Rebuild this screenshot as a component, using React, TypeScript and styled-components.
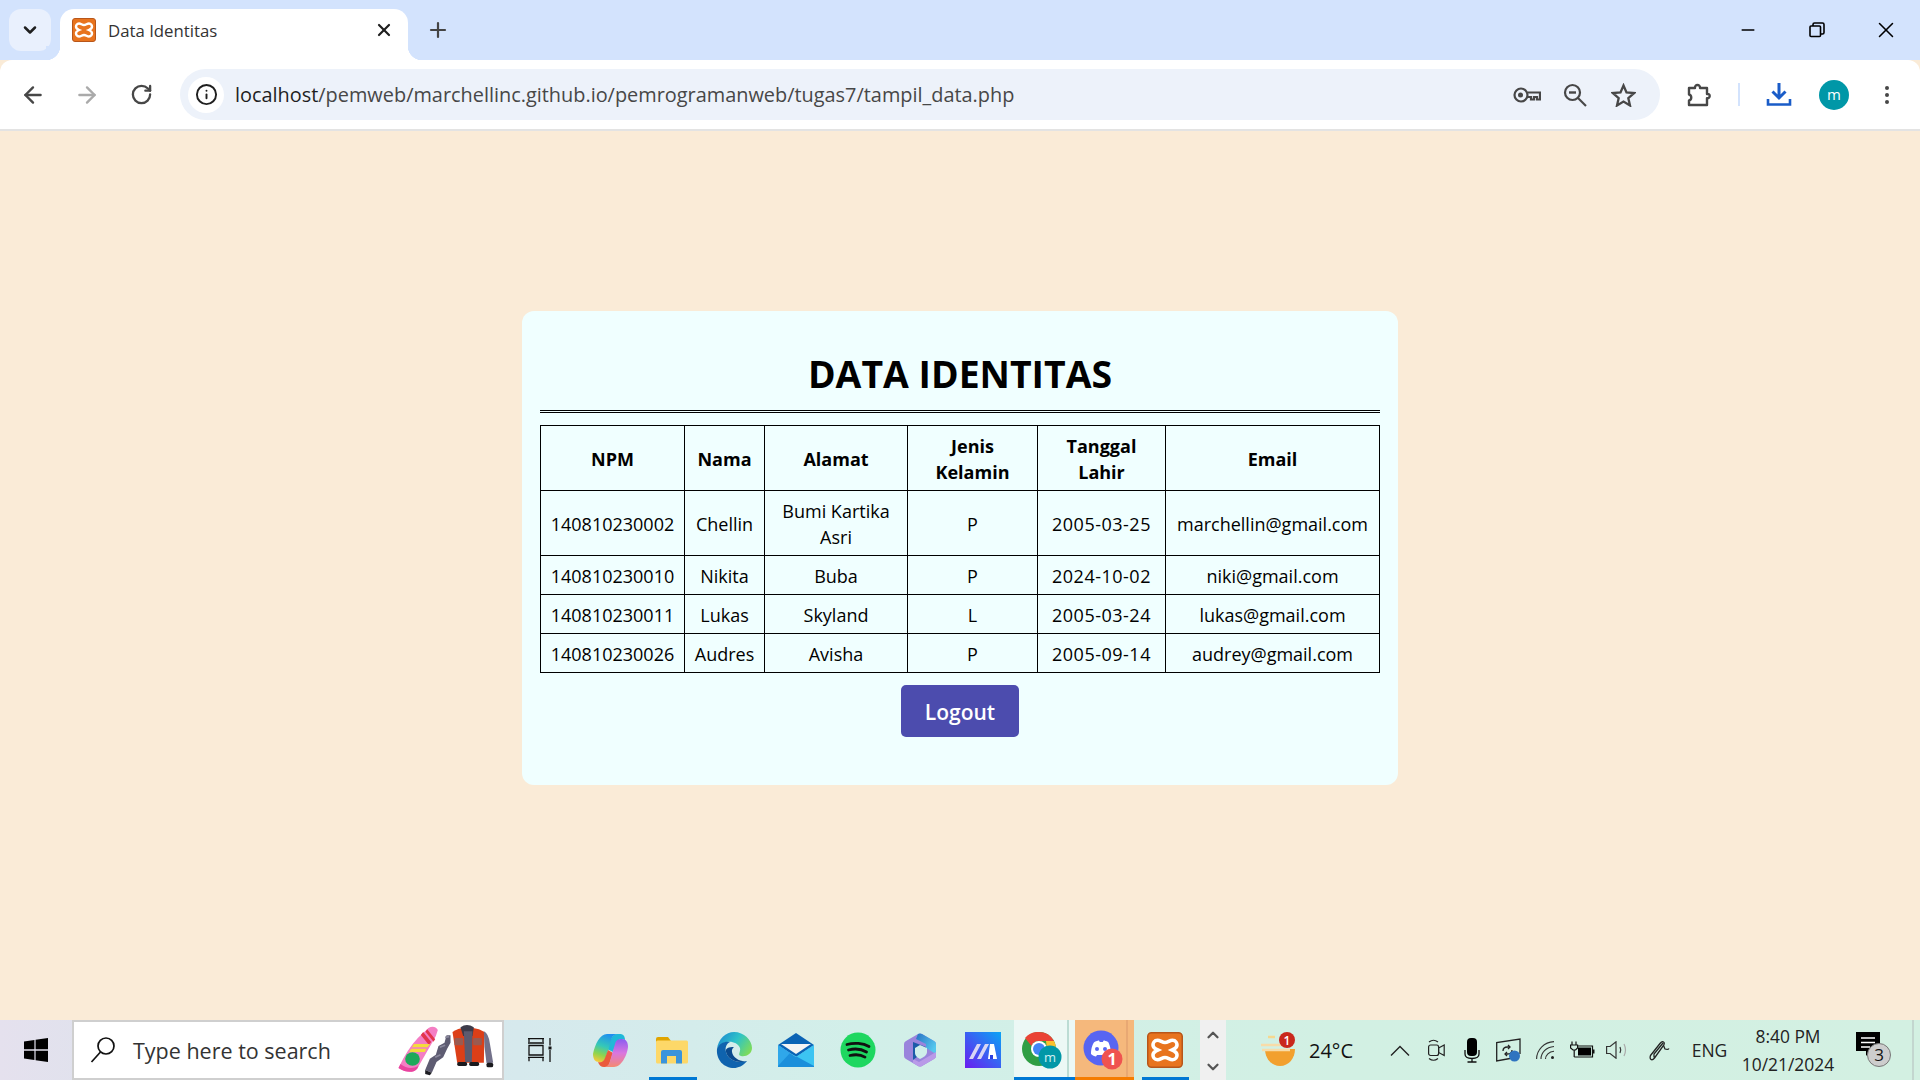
import React from 'react';
import styled, { createGlobalStyle } from 'styled-components';
import { ArrowLeft, ArrowRight, ChevronDown, ChevronUp, Info, Minus, Plus, RotateCw, X } from 'lucide-react';

const FONT = '"Open Sans", "Noto Sans", sans-serif';

const GlobalStyle = createGlobalStyle`
  html, body {
    margin: 0;
    padding: 0;
    height: 100%;
  }
  body {
    font-family: ${FONT};
    background: #faebd7;
    overflow: hidden;
  }
`;

const Screen = styled.div`
  width: 1920px;
  height: 1080px;
  display: flex;
  flex-direction: column;
`;

/* chrome window */
const TabStrip = styled.div`
  height: 60px;
  background: #d3e3fd;
  display: flex;
  align-items: flex-end;
  padding-left: 9px;
`;

const TabSearch = styled.div`
  width: 42px;
  height: 42px;
  margin-bottom: 9px;
  border-radius: 12px;
  background: #e9f0fd;
  color: #1f1f1f;
  display: flex;
  align-items: center;
  justify-content: center;
`;

const Tab = styled.div`
  width: 348px;
  height: 51px;
  margin-left: 9px;
  padding: 0 0 9px 12px;
  box-sizing: border-box;
  background: #fff;
  border-radius: 14px 14px 0 0;
  display: flex;
  align-items: center;
  gap: 12px;
  position: relative;
  &::before,
  &::after {
    content: '';
    position: absolute;
    bottom: 0;
    width: 14px;
    height: 14px;
  }
  &::before {
    left: -14px;
    background: radial-gradient(circle at 0 0, #d3e3fd 14px, #fff 14.5px);
  }
  &::after {
    right: -14px;
    background: radial-gradient(circle at 100% 0, #d3e3fd 14px, #fff 14.5px);
  }
`;

const TabTitle = styled.span`
  flex: 1;
  padding-top: 1px;
  font-size: 16.8px;
  color: #333;
`;

const TabClose = styled.div`
  width: 24px;
  margin-right: 12px;
  display: flex;
  justify-content: center;
  color: #1f1f1f;
`;

const NewTab = styled.div`
  width: 24px;
  height: 24px;
  margin: 0 0 18px 18px;
  color: #444;
`;

const WindowControls = styled.div`
  margin-left: auto;
  height: 60px;
  display: flex;
  align-items: center;
  color: #000;
`;

const WindowButton = styled.div<{ $w: number }>`
  width: ${(p) => p.$w}px;
  display: flex;
  justify-content: center;
`;

const Toolbar = styled.div`
  height: 69px;
  background: #fff;
  border-radius: 12px 12px 0 0;
  display: flex;
  align-items: center;
  padding-left: 6px;
`;

const NavButton = styled.div<{ $off?: boolean }>`
  width: 54px;
  display: flex;
  justify-content: center;
  color: ${(p) => (p.$off ? '#aaa' : '#474747')};
`;

const Omnibox = styled.div`
  width: 1480px;
  height: 51px;
  margin-left: 12px;
  border-radius: 26px;
  background: #edf2fa;
  display: flex;
  align-items: center;
  padding: 0 23px 0 8px;
  box-sizing: border-box;
`;

const SiteInfo = styled.div`
  width: 36px;
  height: 36px;
  border-radius: 50%;
  background: #fff;
  display: flex;
  align-items: center;
  justify-content: center;
  color: #1f1f1f;
`;

const Url = styled.div`
  flex: 1;
  margin-left: 11px;
  font-size: 19.9px;
  color: #474747;
  white-space: nowrap;
  span {
    color: #1f1f1f;
  }
`;

const OmniIcons = styled.div`
  display: flex;
  align-items: center;
  gap: 20px;
  color: #474747;
`;

const OmniIcon = styled.div`
  width: 28px;
  display: flex;
  justify-content: center;
`;

const ToolIcons = styled.div`
  flex: 1;
  display: flex;
  align-items: center;
  padding-left: 26px;
  color: #474747;
`;

const Separator = styled.div`
  width: 2px;
  height: 23px;
  margin: 0 26px 0 26px;
  background: #d3e3fd;
`;

const Avatar = styled.div`
  width: 30px;
  height: 30px;
  margin-left: 27px;
  border-radius: 50%;
  background: #0097a7;
  color: #fff;
  font-size: 15px;
  line-height: 28px;
  text-align: center;
`;

const Dots = styled.div`
  margin-left: 36px;
  width: 4px;
  display: flex;
  flex-direction: column;
  gap: 3px;
  i {
    width: 4px;
    height: 4px;
    border-radius: 50%;
    background: #474747;
  }
`;

/* page */
const Page = styled.main`
  flex: 1;
  border-top: 2px solid #e3e3e3;
  background: #faebd7;
  display: flex;
  justify-content: center;
  align-items: flex-start;
  padding-top: 180px;
`;

const Card = styled.section`
  width: 876px;
  box-sizing: border-box;
  padding: 38px 18px 48px;
  background: #f0ffff;
  border-radius: 12px;
  display: flex;
  flex-direction: column;
  align-items: center;
`;

const Title = styled.h1`
  margin: 0;
  font-size: 37.4px;
  line-height: 50px;
  font-weight: 700;
  color: #000;
`;

const Rule = styled.hr`
  width: 100%;
  margin: 11px 0 12px;
  border: 0;
  border-top: 3px double #000;
  height: 0;
`;

const Table = styled.table`
  width: 839px;
  align-self: flex-start;
  table-layout: fixed;
  border-collapse: collapse;
  font-size: 18px;
  line-height: 26px;
  color: #000;
`;

const Col = styled.col<{ $w: number }>`
  width: ${(p) => p.$w}px;
`;

const Head = styled.th`
  border: 1px solid #000;
  padding: 7px 10px 5px;
  font-weight: 700;
  text-align: center;
`;

const Cell = styled.td<{ $wide?: boolean }>`
  border: 1px solid #000;
  padding: 7px 8px 5px;
  text-align: center;
  letter-spacing: ${(p) => (p.$wide ? '0.5px' : 'normal')};
`;

const LogoutButton = styled.button`
  width: 118px;
  height: 52px;
  margin-top: 12px;
  padding: 2px 0 0;
  border: 0;
  border-radius: 5px;
  background: #4c4cae;
  color: #fff;
  font-family: ${FONT};
  font-size: 21px;
  font-weight: 600;
`;

/* taskbar */
const Taskbar = styled.footer`
  height: 60px;
  display: flex;
  align-items: stretch;
  background: linear-gradient(90deg, #e5e1ee 0%, #e0e2ed 5%, #d6e9ed 27%, #d2efe9 45%, #d2f0e3 70%, #d3f0e2 100%);
`;

const StartButton = styled.div`
  width: 72px;
  display: flex;
  align-items: center;
  justify-content: center;
`;

const SearchBox = styled.div`
  width: 432px;
  box-sizing: border-box;
  border: 2px solid #cfcfcf;
  background: #fff;
  display: flex;
  align-items: center;
  padding-left: 16px;
`;

const SearchText = styled.span`
  margin-left: 17px;
  font-size: 21.5px;
  color: #333;
`;

const SearchArt = styled.div`
  margin-left: auto;
  display: flex;
`;

const TaskView = styled.div`
  width: 72px;
  margin-right: 3px;
  display: flex;
  align-items: center;
  justify-content: center;
`;

const TaskItem = styled.div<{
  $w?: number;
  $bg?: string;
  $bar?: string;
  $barL?: number;
  $barW?: number;
  $stripe?: string;
  $shift?: number;
}>`
  width: ${(p) => p.$w ?? 62}px;
  box-sizing: border-box;
  padding-right: ${(p) => p.$shift ?? 0}px;
  background: ${(p) => p.$bg ?? 'transparent'};
  display: flex;
  align-items: center;
  justify-content: center;
  position: relative;
  &::before {
    content: '';
    position: absolute;
    top: 0;
    bottom: 0;
    right: 6px;
    width: 2px;
    background: ${(p) => p.$stripe ?? 'transparent'};
  }
  &::after {
    content: '';
    position: absolute;
    bottom: 0;
    left: ${(p) => p.$barL ?? 0}px;
    width: ${(p) => p.$barW ?? 48}px;
    height: 3px;
    background: ${(p) => p.$bar ?? 'transparent'};
  }
`;

const Spinner = styled.div`
  width: 26px;
  background: #f0f0f0;
  color: #555;
  display: flex;
  flex-direction: column;
  align-items: center;
  justify-content: space-between;
  padding: 6px 0 4px;
  box-sizing: border-box;
`;

const Weather = styled.div`
  margin-left: 32px;
  display: flex;
  align-items: center;
  gap: 13px;
  font-size: 20px;
  color: #111;
  width: 124px;
`;

const Tray = styled.div`
  flex: 1;
  display: flex;
  align-items: center;
  color: #222;
`;

const TrayIcon = styled.div<{ $w: number }>`
  width: ${(p) => p.$w}px;
  display: flex;
  justify-content: center;
`;

const Lang = styled.span`
  width: 51px;
  text-align: center;
  font-size: 17.5px;
  color: #222;
`;

const Clock = styled.div`
  width: 106px;
  font-size: 17.4px;
  line-height: 28px;
  text-align: center;
  color: #222;
`;

const EdgeLine = styled.div`
  width: 2px;
  height: 60px;
  margin-left: auto;
  margin-right: 6px;
  background: #c3d6cf;
`;

const people = [
  { npm: '140810230002', nama: 'Chellin', alamat: 'Bumi Kartika Asri', jk: 'P', lahir: '2005-03-25', email: 'marchellin@gmail.com' },
  { npm: '140810230010', nama: 'Nikita', alamat: 'Buba', jk: 'P', lahir: '2024-10-02', email: 'niki@gmail.com' },
  { npm: '140810230011', nama: 'Lukas', alamat: 'Skyland', jk: 'L', lahir: '2005-03-24', email: 'lukas@gmail.com' },
  { npm: '140810230026', nama: 'Audres', alamat: 'Avisha', jk: 'P', lahir: '2005-09-14', email: 'audrey@gmail.com' },
];

const COLS = [144, 80, 143, 130, 128, 214];

const Xampp: React.FC<{ size: number }> = ({ size }) => (
  <svg width={size} height={size} viewBox="0 0 24 24">
    <rect x="0.5" y="0.5" width="23" height="23" rx="2.500" fill="#e8741e" stroke="#b8561a" />
    <path
      d="M7 5.500c2 0 3 1.500 5 1.500s3-1.500 5-1.500c2.200 0 3 2 3 3.200 0 1.800-1.600 2.600-3.200 3.300 1.600.7 3.200 1.500 3.200 3.300 0 1.200-.8 3.200-3 3.200-2 0-3-1.500-5-1.500s-3 1.500-5 1.500c-2.200 0-3-2-3-3.200 0-1.800 1.600-2.600 3.200-3.300C5.600 11.300 4 10.500 4 8.700c0-1.200.8-3.200 3-3.200z"
      fill="none"
      stroke="#fff"
      strokeWidth="2.400"
    />
  </svg>
);

const KeyIcon = () => (
  <svg width="28" height="18" viewBox="0 0 28 18" fill="none" stroke="currentColor" strokeWidth="2.200">
    <circle cx="8" cy="9" r="6.500" />
    <circle cx="7.500" cy="9" r="2.500" fill="currentColor" stroke="none" />
    <path d="M14.500 6.500H27v7h-3V11h-3v2.500h-3V11h-3.500" />
  </svg>
);

const ZoomOutIcon = () => (
  <svg width="24" height="24" viewBox="0 0 24 24" fill="none" stroke="currentColor" strokeWidth="2.200">
    <circle cx="9.500" cy="9.500" r="7.500" />
    <path d="M15 15l8 8" />
    <path d="M6 9.500h7" strokeWidth="2.400" />
  </svg>
);

const StarIcon = () => (
  <svg width="25" height="24" viewBox="0 0 25 24" fill="none" stroke="currentColor" strokeWidth="2.300" strokeLinejoin="miter">
    <path d="M12.500 2.500l3 7 7.500.6-5.700 5 1.700 7.400-6.500-3.900-6.500 3.900 1.700-7.400L2 10.100l7.500-.6z" />
  </svg>
);

const PuzzleIcon = () => (
  <svg width="26" height="26" viewBox="0 0 26 26" fill="none" stroke="currentColor" strokeWidth="2.400" strokeLinejoin="round">
    <path d="M3 6h6c-.6-4 5.500-4 5 0h7v6c3.600-.6 3.600 4.700 0 4.200V23H3v-4.500c3-.6 3-5.300 0-6z" />
  </svg>
);

const DownloadIcon = () => (
  <svg width="26" height="26" viewBox="0 0 26 26" fill="none" stroke="#1a5cc8" strokeWidth="3">
    <path d="M13 1v14M6.500 9.500 13 16l6.500-6.500" />
    <path d="M2 17v5.500h22V17" strokeWidth="2.600" />
  </svg>
);

const RestoreIcon = () => (
  <svg width="16" height="16" viewBox="0 0 16 16" fill="none" stroke="currentColor" strokeWidth="1.600">
    <rect x="1" y="4" width="10.500" height="10.500" rx="1" />
    <path d="M4 4V2.500Q4 1 5.500 1h8Q15 1 15 2.500v8Q15 12 13.500 12H11.500" />
  </svg>
);

const WindowsIcon = () => (
  <svg width="24" height="24" viewBox="0 0 24 24" fill="#000">
    <path d="M0 3.500 10.400 2V11.300H0zM11.600 1.800 24 0V11.300H11.600zM0 12.700h10.400V22L0 20.500zM11.600 12.700H24V24l-12.400-1.800z" />
  </svg>
);

const SearchGlass = () => (
  <svg width="26" height="28" viewBox="0 0 26 28" fill="none" stroke="#111" strokeWidth="1.700">
    <circle cx="16" cy="10" r="8" />
    <path d="M10.500 16 1.500 26" />
  </svg>
);

const HoverArt = () => (
  <svg width="107" height="56" viewBox="0 6 320 168">
    <path d="M100 24Q118 14 128 30Q124 48 112 66L66 146Q46 166 10 144Q36 88 68 54Z" fill="#f47ec4" />
    <path d="M10 144Q46 166 66 146L70 138Q42 152 16 132Z" fill="#e9449f" />
    <path d="M84 36l24 30-7 9-24-30zM96 28l24 30-5 7-24-30z" fill="#e2354c" />
    <path d="M56 72h48l-7 10H50zM48 86h46l-5 10H42z" fill="#f4dc3c" />
    <ellipse cx="52" cy="117" rx="22" ry="20" fill="#1fa85a" />
    <path d="M90 150l14-34 18-12 8-26 18-10 6-22 12 0 0 22-10 18-12 26-20 14-14 32z" fill="#5e5c72" />
    <path d="M120 112l16-8M134 82l16-6M150 52l12-2" stroke="#8a889c" strokeWidth="5" />
    <path d="M90 150l20 8-6 8-14-4z" fill="#1d1d22" />
    <path d="M172 36Q190 24 206 24L234 24Q252 26 268 36L266 128H186Z" fill="#dc3f18" />
    <path d="M196 22Q215 8 236 22L232 48H204Z" fill="#3c3b4a" />
    <path d="M206 34h26l-2 92h-20z" fill="#5c5a6e" />
    <rect x="178" y="54" width="26" height="22" rx="3" fill="#9a5a50" />
    <rect x="234" y="54" width="26" height="22" rx="3" fill="#9a5a50" />
    <path d="M266 34Q280 40 284 70L294 128 274 130 268 80z" fill="#73718a" />
    <rect x="186" y="126" width="30" height="12" rx="5" fill="#1a1a1e" />
    <rect x="222" y="126" width="30" height="12" rx="5" fill="#1a1a1e" />
    <rect x="274" y="128" width="20" height="14" rx="5" fill="#1a1a1e" />
  </svg>
);

const TaskViewIcon = () => (
  <svg width="24" height="24" viewBox="0 0 24 24" fill="none" stroke="#111" strokeWidth="1.300">
    <path d="M0 .7h16M1 .7v3.300M15 .7v3.300M0 5h16" />
    <path d="M1 7.500h14v9.500H1z" />
    <path d="M0 19.300h16M1 19.300v4M15 19.300v4" />
    <path d="M22 0v7.500M22 12v12" />
    <rect x="20.500" y="8.500" width="3" height="3" fill="#111" stroke="none" />
  </svg>
);

const CopilotIcon = () => (
  <svg width="35" height="33" viewBox="0 0 35 33">
    <defs>
      <linearGradient id="cp1" x1="0.6" y1="0" x2="0.3" y2="1">
        <stop offset="0" stopColor="#1f8ff0" />
        <stop offset="0.45" stopColor="#35c8b8" />
        <stop offset="0.75" stopColor="#8ed44e" />
        <stop offset="1" stopColor="#f4c93a" />
      </linearGradient>
      <linearGradient id="cp2" x1="0.5" y1="0" x2="0.5" y2="1">
        <stop offset="0" stopColor="#8a5cf0" />
        <stop offset="0.5" stopColor="#d976e0" />
        <stop offset="1" stopColor="#f58a70" />
      </linearGradient>
    </defs>
    <path d="M24 0h3c3 0 5 2 5 6l-3-1c-3 0-5 2-6 5l-3 8-6-3 4-10c1-3 3-5 6-5z" fill="#20b8d8" />
    <path d="M14 0h11c-4 0-6 2-7 7l-5 16c-1 4-3 6-7 5-4 0-6-3-6-8C2 10 7 0 14 0z" fill="url(#cp1)" />
    <path d="M12 33h-1c-3 0-5-2-6-5 4 1 6-1 7-4l3-8 5 3-3 9c-1 3-2 5-5 5z" fill="#ea5a3c" />
    <path d="M21 33H10c4 0 6-2 7-6l5-17c1-4 3-5 7-5 4 0 6 3 6 8-1 9-7 20-14 20z" fill="url(#cp2)" />
  </svg>
);

const FolderIcon = () => (
  <svg width="32" height="27" viewBox="0 0 32 27">
    <path d="M0 2q0-2 2-2h10l3 4v3H0z" fill="#e0a400" />
    <rect x="0" y="3.500" width="32" height="23" rx="1.500" fill="#fdd868" />
    <path d="M5 26.500V15q0-2 2-2h17q2 0 2 2v11.500h-6V19h-9v7.500z" fill="#3a94dc" />
  </svg>
);

const EdgeIcon = () => (
  <svg width="36" height="36" viewBox="0 0 36 36">
    <defs>
      <linearGradient id="ed1" x1="0" y1="0.2" x2="1" y2="0.7">
        <stop offset="0" stopColor="#1c8ad2" />
        <stop offset="0.5" stopColor="#2dc3c8" />
        <stop offset="1" stopColor="#7fdc58" />
      </linearGradient>
    </defs>
    <path d="M1 17C2 7 10 0 18 0c10 0 18 8 18 16 0 6-6 9-11 8-4-1 0-4-1-8-2-5-8-7-13-6-5 1-9 4-10 7z" fill="url(#ed1)" />
    <path d="M1 17c2-6 8-8 13-7-4 2-5 6-4 10 2 8 12 12 21 9-4 5-9 7-13 7C8 36 0 28 1 17z" fill="#0f63ae" />
    <path d="M10 20c2 8 12 12 21 9-7 1-14-3-15-9-.5-2 .5-4 2-5-5 0-9 1-8 5z" fill="#0a4a8e" />
  </svg>
);

const MailIcon = () => (
  <svg width="36" height="34" viewBox="0 0 36 34">
    <path d="M0 12 18 0l18 12-18 12z" fill="#0a63b5" />
    <path d="M3 11h30L18 21z" fill="#f4f4f4" />
    <path d="M0 12 18 24 36 12v22H0z" fill="#1b8fdb" />
    <path d="M12 20l6 4 18-12v21z" fill="#3cc4f2" />
    <path d="M0 12l12 8L0 33z" fill="#2fa7ea" />
  </svg>
);

const SpotifyIcon = () => (
  <svg width="36" height="36" viewBox="0 0 36 36" fill="none">
    <circle cx="18" cy="18" r="17.500" fill="#1ed760" />
    <path d="M7 12.500c7-2 16-1.500 22 2M8.500 18c6-1.600 13-1 18 2M10 23.500c5-1.200 11-.8 15 1.600" stroke="#111" strokeWidth="2.800" strokeLinecap="round" />
  </svg>
);

const M365Icon = () => (
  <svg width="32" height="34" viewBox="0 0 32 34">
    <defs>
      <linearGradient id="ms1" x1="0" y1="0" x2="1" y2="0.6">
        <stop offset="0" stopColor="#2872c4" />
        <stop offset="1" stopColor="#56c8ee" />
      </linearGradient>
    </defs>
    <path d="M2 8 14 1q2-1 4 0l12 7q2 1 2 3v12q0 2-2 3L18 33q-2 1-4 0L2 26q-2-1-2-3V11q0-2 2-3z" fill="#9a84dc" />
    <path d="M14 1q2-1 4 0l12 7q2 1 2 3v10l-10-6v-4L12 6z" fill="url(#ms1)" />
    <path d="M9 26l6 3 17-10v4q0 2-2 3L18 33q-2 1-4 0l-5-3z" fill="#b99ae8" />
    <path d="M9 9l13 5v3L9 27z" fill="#1c5aa8" />
    <path d="M16 12l7 3v4c0 3-3 5-7 7-2-1-5-3-5-6v-5z" fill="#cfeeea" />
  </svg>
);

const MIcon = () => (
  <svg width="36" height="36" viewBox="0 0 36 36">
    <defs>
      <linearGradient id="mi" x1="0" y1="1" x2="1" y2="0">
        <stop offset="0" stopColor="#6a1cf0" />
        <stop offset="1" stopColor="#0aa4f5" />
      </linearGradient>
    </defs>
    <rect width="36" height="36" fill="url(#mi)" />
    <path d="M4 27l8-15h4L8 27zM12 27l8-15h4l-8 15z" fill="#d8d6f5" />
    <path d="M25 12h4l3 15h-9z" fill="#fff" />
    <rect x="25" y="23" width="3" height="4" fill="#2b3fe0" />
  </svg>
);

const ChromeIcon = () => (
  <svg width="40" height="37" viewBox="0 0 40 37">
    <circle cx="17" cy="17" r="17" fill="#2f9e44" />
    <path d="M17 0a17 17 0 0 1 15 9H17a8 8 0 0 0-7.500 5L3 6A17 17 0 0 1 17 0z" fill="#ea4335" />
    <path d="M32 9a17 17 0 0 1-9 24l-5-9 7-7-1-8z" fill="#fbc02d" />
    <circle cx="17" cy="17" r="8" fill="#fff" />
    <circle cx="17" cy="17" r="6" fill="#4285f4" />
    <circle cx="28" cy="25" r="11.500" fill="#0097a7" />
    <text x="28" y="30" textAnchor="middle" fontSize="13" fill="#cdeff2" fontFamily={FONT}>m</text>
  </svg>
);

const DiscordIcon = () => (
  <svg width="40" height="40" viewBox="0 0 40 40">
    <circle cx="18" cy="18" r="17.500" fill="#5865f2" />
    <path d="M8 24c0-6 2-11 3.500-12 2-1 3.500-1.500 4.500-1.500l.8 1.500h3l.8-1.500c1 0 2.500.5 4.500 1.500C26 13 28 18 28 24c-1.500 1.500-3.500 2.500-5 2.500L22 25h-8l-1 1.500c-1.500 0-3.500-1-5-2.500z" fill="#fff" />
    <circle cx="14" cy="19" r="2" fill="#5865f2" />
    <circle cx="22" cy="19" r="2" fill="#5865f2" />
    <circle cx="29" cy="29" r="10.500" fill="#ef5350" />
    <text x="29" y="35" textAnchor="middle" fontSize="16" fontWeight="700" fill="#fff" fontFamily={FONT}>1</text>
  </svg>
);

const WeatherIcon = () => (
  <svg width="38" height="38" viewBox="0 0 38 38">
    <path d="M7 18h30c0 9-6 17-15 17S7 27 7 18z" fill="#f2a02e" />
    <path d="M10 6h7" stroke="#f5d890" strokeWidth="2.500" />
    <path d="M3 14h22M4 19h28" stroke="#f8dca8" strokeWidth="2.500" />
    <circle cx="29" cy="9" r="8" fill="#c9281c" />
    <text x="29" y="14" textAnchor="middle" fontSize="12" fontWeight="600" fill="#fff" fontFamily={FONT}>1</text>
  </svg>
);

const CaretIcon = () => (
  <svg width="20" height="11" viewBox="0 0 20 11" fill="none" stroke="#222" strokeWidth="1.400">
    <path d="M1 10.500 10 1.500l9 9" />
  </svg>
);

const MeetIcon = () => (
  <svg width="17" height="22" viewBox="0 0 17 22" fill="none" stroke="#222" strokeWidth="1.200">
    <rect x="0.600" y="6" width="10" height="10.500" rx="2" />
    <path d="M10.600 9l5.600-3v10.500l-5.600-3zM1 3Q5.500-.5 10 3M1 19.500q4.500 3.500 9 0" />
  </svg>
);

const MicIcon = () => (
  <svg width="16" height="25" viewBox="0 0 16 25" fill="none" stroke="#111" strokeWidth="1.300">
    <rect x="3" y="0" width="10" height="18" rx="4" fill="#000" stroke="none" />
    <path d="M1 12v4q0 4.500 7 4.500t7-4.500v-4M8 20.500v3.500M3.500 24h9" />
  </svg>
);

const ScreenIcon = () => (
  <svg width="25" height="24" viewBox="0 0 25 24" fill="none" stroke="#222" strokeWidth="1.300">
    <path d="M14 20.500 .7 23V4.500L24 1v15" />
    <path d="M7 13q0-4 4.500-4l2 0M16 12q0 4-4.500 4l-2 0" />
    <path d="M12 7l2 2-2 2M11 14l-2 2 2 2" />
    <circle cx="18.500" cy="18" r="5.500" fill="#2f74c0" stroke="none" />
  </svg>
);

const WifiIcon = () => (
  <svg width="19" height="19" viewBox="0 0 19 19" fill="none" stroke="#333" strokeWidth="1.100">
    <path d="M.6 18C.6 9 8 1 18 .6M5 18C5 12 10 6 18 5.500M9.500 18c0-3.500 3.500-7.500 8.500-7.800" />
    <circle cx="16.500" cy="16.500" r="1.500" fill="#222" stroke="none" />
  </svg>
);

const BatteryIcon = () => (
  <svg width="25" height="18" viewBox="0 0 25 18" fill="none" stroke="#111" strokeWidth="1.200">
    <path d="M2 .5V4M6 .5V4M.6 4h7v3L5.500 9H3L.6 7zM4.200 9v7" />
    <path d="M4.200 16h18.300V5H8" />
    <rect x="8" y="6.500" width="13" height="8" fill="#000" stroke="none" />
    <rect x="23" y="8.500" width="1.500" height="4" fill="#111" stroke="none" />
  </svg>
);

const SpeakerIcon = () => (
  <svg width="23" height="18" viewBox="0 0 23 18" fill="none" stroke="#333" strokeWidth="1.200">
    <path d="M.6 5.500h3.500L10 .8v16.400l-5.900-4.700H.6z" />
    <path d="M14 6q1.500 3 0 6" />
    <path d="M18 3q3 6 0 12" stroke="#aaa" />
  </svg>
);

const PenIcon = () => (
  <svg width="21" height="21" viewBox="0 0 21 21" fill="none" stroke="#222" strokeWidth="1.300">
    <path d="M1.500 15.500 11 3.500q2-2.500 3.500-1.500t0 3.500L5.500 18q-2 2.500-3.500 1.500t-.5-4zM5 17.500 5 14l9-11" />
    <path d="M14.500 5.500 16 9q3 1 4-.5" />
  </svg>
);

const NotifyIcon = () => (
  <svg width="38" height="38" viewBox="0 0 38 38">
    <path d="M1 1h24v19H15l-4 5v-5H1z" fill="#000" />
    <path d="M6 7h14M6 11.500h14M6 16h9" stroke="#fff" strokeWidth="1.300" />
    <circle cx="24" cy="24" r="11.500" fill="#cdcdcd" stroke="#777" />
    <text x="24" y="30" textAnchor="middle" fontSize="17" fill="#111" fontFamily={FONT}>3</text>
  </svg>
);

const App: React.FC = () => (
  <Screen>
    <GlobalStyle />
    <TabStrip>
      <TabSearch>
        <ChevronDown size={20} strokeWidth={3} />
      </TabSearch>
      <Tab>
        <Xampp size={24} />
        <TabTitle>Data Identitas</TabTitle>
        <TabClose>
          <X size={20} strokeWidth={2.6} />
        </TabClose>
      </Tab>
      <NewTab>
        <Plus size={24} strokeWidth={2.2} />
      </NewTab>
      <WindowControls>
        <WindowButton $w={68}>
          <Minus size={20} strokeWidth={1.8} />
        </WindowButton>
        <WindowButton $w={70}>
          <RestoreIcon />
        </WindowButton>
        <WindowButton $w={68}>
          <X size={26} strokeWidth={1.4} />
        </WindowButton>
      </WindowControls>
    </TabStrip>
    <Toolbar>
      <NavButton>
        <ArrowLeft size={26} strokeWidth={2.2} />
      </NavButton>
      <NavButton $off>
        <ArrowRight size={26} strokeWidth={2.2} />
      </NavButton>
      <NavButton>
        <RotateCw size={23} strokeWidth={2.4} />
      </NavButton>
      <Omnibox>
        <SiteInfo>
          <Info size={23} strokeWidth={2} />
        </SiteInfo>
        <Url>
          <span>localhost</span>/pemweb/marchellinc.github.io/pemrogramanweb/tugas7/tampil_data.php
        </Url>
        <OmniIcons>
          <OmniIcon>
            <KeyIcon />
          </OmniIcon>
          <OmniIcon>
            <ZoomOutIcon />
          </OmniIcon>
          <OmniIcon>
            <StarIcon />
          </OmniIcon>
        </OmniIcons>
      </Omnibox>
      <ToolIcons>
        <PuzzleIcon />
        <Separator />
        <DownloadIcon />
        <Avatar>m</Avatar>
        <Dots>
          <i />
          <i />
          <i />
        </Dots>
      </ToolIcons>
    </Toolbar>
    <Page>
      <Card>
        <Title>DATA IDENTITAS</Title>
        <Rule />
        <Table>
          <colgroup>
            {COLS.map((w, i) => (
              <Col key={i} $w={w} />
            ))}
          </colgroup>
          <thead>
            <tr>
              <Head>NPM</Head>
              <Head>Nama</Head>
              <Head>Alamat</Head>
              <Head>Jenis Kelamin</Head>
              <Head>Tanggal Lahir</Head>
              <Head>Email</Head>
            </tr>
          </thead>
          <tbody>
            {people.map((row) => (
              <tr key={row.npm}>
                <Cell>{row.npm}</Cell>
                <Cell>{row.nama}</Cell>
                <Cell>{row.alamat}</Cell>
                <Cell>{row.jk}</Cell>
                <Cell $wide>{row.lahir}</Cell>
                <Cell>{row.email}</Cell>
              </tr>
            ))}
          </tbody>
        </Table>
        <LogoutButton>Logout</LogoutButton>
      </Card>
    </Page>
    <Taskbar>
      <StartButton>
        <WindowsIcon />
      </StartButton>
      <SearchBox>
        <SearchGlass />
        <SearchText>Type here to search</SearchText>
        <SearchArt>
          <HoverArt />
        </SearchArt>
      </SearchBox>
      <TaskView>
        <TaskViewIcon />
      </TaskView>
      <TaskItem>
        <CopilotIcon />
      </TaskItem>
      <TaskItem $bar="#0078d4" $barL={8}>
        <FolderIcon />
      </TaskItem>
      <TaskItem>
        <EdgeIcon />
      </TaskItem>
      <TaskItem>
        <MailIcon />
      </TaskItem>
      <TaskItem>
        <SpotifyIcon />
      </TaskItem>
      <TaskItem>
        <M365Icon />
      </TaskItem>
      <TaskItem $w={63}>
        <MIcon />
      </TaskItem>
      <TaskItem $w={61} $bg="#ecf8f5" $bar="#0078d4" $barW={61} $stripe="#bcdcd4" $shift={6}>
        <ChromeIcon />
      </TaskItem>
      <TaskItem $w={59} $bg="#f5b87c" $bar="#f57c00" $barW={59} $stripe="#e8a873" $shift={3}>
        <DiscordIcon />
      </TaskItem>
      <TaskItem $w={66} $bar="#0078d4" $barL={8} $barW={47} $shift={4}>
        <Xampp size={36} />
      </TaskItem>
      <Spinner>
        <ChevronUp size={18} strokeWidth={3} />
        <ChevronDown size={18} strokeWidth={3} />
      </Spinner>
      <Weather>
        <WeatherIcon />
        24°C
      </Weather>
      <Tray>
        <TrayIcon $w={36}>
          <CaretIcon />
        </TrayIcon>
        <TrayIcon $w={36}>
          <MeetIcon />
        </TrayIcon>
        <TrayIcon $w={36}>
          <MicIcon />
        </TrayIcon>
        <TrayIcon $w={36}>
          <ScreenIcon />
        </TrayIcon>
        <TrayIcon $w={38}>
          <WifiIcon />
        </TrayIcon>
        <TrayIcon $w={36}>
          <BatteryIcon />
        </TrayIcon>
        <TrayIcon $w={34}>
          <SpeakerIcon />
        </TrayIcon>
        <TrayIcon $w={50}>
          <PenIcon />
        </TrayIcon>
        <Lang>ENG</Lang>
        <Clock>
          8:40 PM
          <br />
          10/21/2024
        </Clock>
        <TrayIcon $w={66}>
          <NotifyIcon />
        </TrayIcon>
        <EdgeLine />
      </Tray>
    </Taskbar>
  </Screen>
);

export default App;
